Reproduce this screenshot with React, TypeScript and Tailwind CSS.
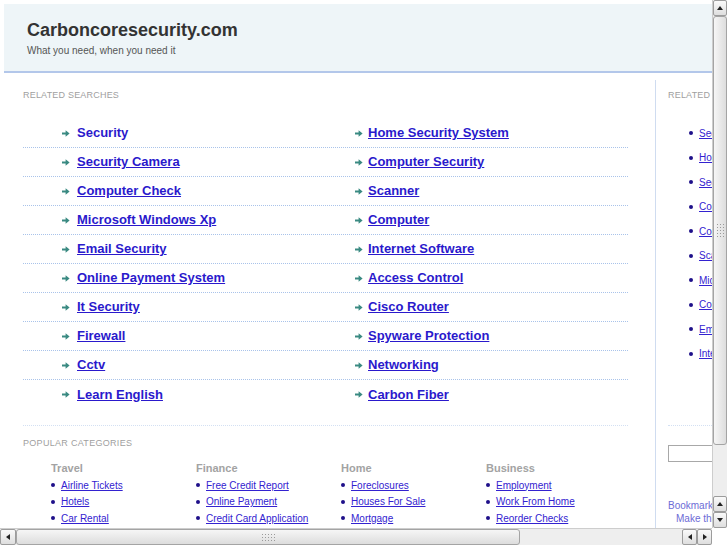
import React from "react";

const leftLinks = [
  "Security",
  "Security Camera",
  "Computer Check",
  "Microsoft Windows Xp",
  "Email Security",
  "Online Payment System",
  "It Security",
  "Firewall",
  "Cctv",
  "Learn English",
];
const rightLinks = [
  "Home Security System",
  "Computer Security",
  "Scanner",
  "Computer",
  "Internet Software",
  "Access Control",
  "Cisco Router",
  "Spyware Protection",
  "Networking",
  "Carbon Fiber",
];
const sideLinks = [
  "Security",
  "Home Security System",
  "Security Camera",
  "Computer Security",
  "Computer Check",
  "Scanner",
  "Microsoft Windows Xp",
  "Computer",
  "Email Security",
  "Internet Software",
];
const categories = [
  { title: "Travel", links: ["Airline Tickets", "Hotels", "Car Rental"] },
  { title: "Finance", links: ["Free Credit Report", "Online Payment", "Credit Card Application"] },
  { title: "Home", links: ["Foreclosures", "Houses For Sale", "Mortgage"] },
  { title: "Business", links: ["Employment", "Work From Home", "Reorder Checks"] },
];

const Arrow = () => (
  <svg width="8" height="7" viewBox="0 0 8 7" className="shrink-0">
    <path d="M0 2.6h3.6V0.2L7.6 3.5 3.6 6.8V4.4H0z" fill="#3a8a82" />
  </svg>
);

const Tri = ({ dir }: { dir: "up" | "down" | "left" | "right" }) => {
  const pts = {
    up: "1,6 4,2 7,6",
    down: "1,2 4,6 7,2",
    left: "6,1 2,4 6,7",
    right: "2,1 6,4 2,7",
  }[dir];
  return (
    <svg width="8" height="8" viewBox="0 0 8 8">
      <polygon points={pts} fill="#222" />
    </svg>
  );
};

const Btn = ({ dir, cls }: { dir: "up" | "down" | "left" | "right"; cls: string }) => (
  <div className={`${cls} flex items-center justify-center rounded-[2px] border border-[#9c9c9c] bg-gradient-to-b from-[#fafafa] to-[#dedede]`}>
    <Tri dir={dir} />
  </div>
);

const Grip = ({ vertical }: { vertical?: boolean }) => (
  <div className={`grid gap-[2px] ${vertical ? "grid-cols-3" : "grid-cols-5"}`}>
    {Array.from({ length: 15 }).map((_, i) => (
      <div key={i} className="w-px h-px bg-[#9a9a9a]" />
    ))}
  </div>
);

const LinkRow = ({ a, b, first, last }: { a: string; b: string; first?: boolean; last?: boolean }) => (
  <div className={`flex items-center pl-[39px] h-[29px] ${last ? "" : "border-b border-dotted border-[#a9c3ea]"}`}>
    <div className="w-[293px] flex items-center gap-[7px]">
      <Arrow />
      <a className={`text-[13px] font-bold text-[#2a19cc] ${first ? "no-underline" : "underline"}`}>{a}</a>
    </div>
    <div className="flex items-center gap-[5px]">
      <Arrow />
      <a className="text-[13px] font-bold text-[#2a19cc] underline">{b}</a>
    </div>
  </div>
);

export default function App() {
  return (
    <div
      className="w-[727px] h-[545px] flex flex-col overflow-hidden bg-white"
      style={{ fontFamily: '"Liberation Sans", Arial, sans-serif' }}
    >
      <div className="flex flex-1 min-h-0">
        <div className="w-[712px] overflow-hidden">
          <div className="w-[860px] pt-[4px] pl-[4px]">
            <div className="h-[69px] bg-[#eef5f8] border-b-2 border-[#b3c7ea] pl-[23px] pt-[15px]">
              <div className="text-[18px] leading-[22px] font-bold text-[#333]">Carboncoresecurity.com</div>
              <div className="text-[10px] leading-[13px] mt-[3px] text-[#555]">What you need, when you need it</div>
            </div>
            <div className="flex mt-[7px]">
              <div className="w-[651px] shrink-0 pl-[19px] pr-[27px] pt-[9px]">
                <div className="text-[9px] leading-[12px] text-[#a0a0a0] tracking-[0.2px]">RELATED SEARCHES</div>
                <div className="mt-[18px]">
                  {leftLinks.map((l, i) => (
                    <LinkRow key={l} a={l} b={rightLinks[i]} first={i === 0} last={i === leftLinks.length - 1} />
                  ))}
                </div>
                <div className="mt-[16px] border-t border-dotted border-[#d3e0f3]" />
                <div className="mt-[11px] text-[9px] leading-[12px] text-[#a0a0a0] tracking-[0.3px]">POPULAR CATEGORIES</div>
                <div className="flex ml-[28px] mt-[13px]">
                  {categories.map((c) => (
                    <div key={c.title} className="w-[145px] shrink-0">
                      <div className="text-[11px] leading-[12px] font-bold text-[#a3a3a3]">{c.title}</div>
                      <div className="mt-[3px]">
                        {c.links.map((l) => (
                          <div key={l} className="flex items-center h-[16.5px]">
                            <span className="w-[4px] h-[4px] rounded-full bg-[#1e108a] shrink-0" />
                            <a className="ml-[6px] text-[10px] text-[#3322d0] underline">{l}</a>
                          </div>
                        ))}
                      </div>
                    </div>
                  ))}
                </div>
              </div>
              <div className="w-[200px] shrink-0 border-l border-[#cfdcf0] pl-[12px] pt-[9px] min-h-[470px]">
                <div className="text-[9px] leading-[12px] text-[#a0a0a0] tracking-[0.2px]">RELATED SEARCHES</div>
                <div className="mt-[20px] ml-[21px]">
                  {sideLinks.map((l) => (
                    <div key={l} className="flex items-center h-[24.5px]">
                      <span className="w-[4px] h-[4px] rounded-full bg-[#1e108a] shrink-0" />
                      <a className="ml-[6px] text-[10px] text-[#3322d0] underline whitespace-nowrap">{l}</a>
                    </div>
                  ))}
                </div>
                <div className="mt-[59px] border-t border-dotted border-[#d3e0f3] w-[160px]" />
                <div className="mt-[19px] w-[150px] h-[17px] border border-[#a8a8a8] bg-white" />
                <div className="mt-[37px] text-[10px] leading-[13px] text-[#6d6bd6] whitespace-nowrap">Bookmark this page</div>
                <div className="pl-[8px] text-[10px] leading-[13px] text-[#6d6bd6] whitespace-nowrap">Make this your homepage</div>
              </div>
            </div>
          </div>
        </div>
        {/* vertical scrollbar */}
        <div className="w-[15px] flex flex-col bg-[#ececec] border-l border-[#cdcdcd]">
          <Btn dir="up" cls="h-[16px]" />
          <div className="h-[429px] rounded-[3px] border border-[#a4a4a4] bg-gradient-to-r from-[#f6f6f6] to-[#dddddd] flex items-center justify-center">
            <Grip vertical />
          </div>
          <div className="flex-1 bg-[#eeeeee]" />
          <Btn dir="up" cls="h-[16px]" />
          <Btn dir="down" cls="h-[16px]" />
        </div>
      </div>
      {/* horizontal scrollbar */}
      <div className="h-[17px] flex">
        <div className="w-[712px] flex bg-[#ececec] border-t border-[#cdcdcd]">
          <Btn dir="left" cls="w-[16px]" />
          <div className="w-[504px] rounded-[3px] border border-[#a4a4a4] bg-gradient-to-b from-[#f6f6f6] to-[#dddddd] flex items-center justify-center">
            <Grip />
          </div>
          <div className="flex-1 bg-[#eeeeee]" />
          <Btn dir="left" cls="w-[15px]" />
          <Btn dir="right" cls="w-[15px]" />
        </div>
        <div className="w-[15px] bg-white" />
      </div>
    </div>
  );
}
